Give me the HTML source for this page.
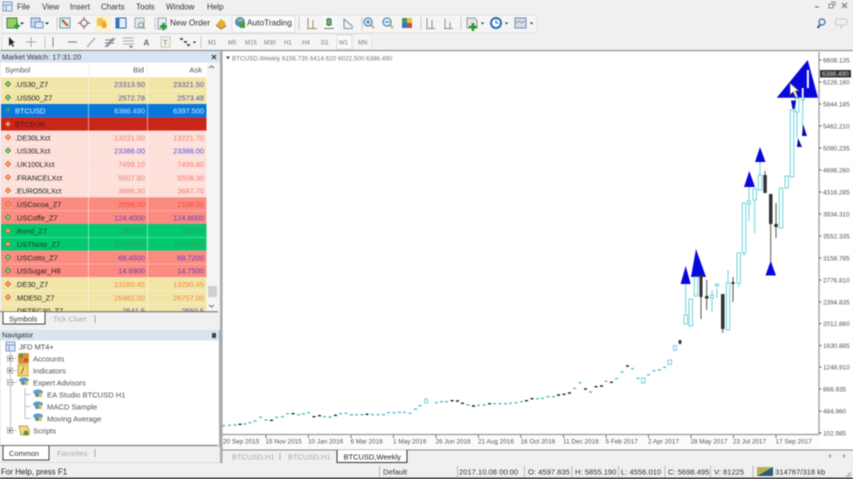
<!DOCTYPE html>
<html><head><meta charset="utf-8"><style>
html,body{margin:0;padding:0;width:853px;height:479px;overflow:hidden;background:#f0f0f0}
svg{display:block;filter:blur(.55px)}
text{font-family:"Liberation Sans",sans-serif;font-size:7.4px;fill:#222}
.m{font-size:8px;fill:#333}
.tf{font-size:6.3px;fill:#777}
.ax{font-size:6.4px;fill:#555}
.r{text-anchor:end}
.n{fill:#555055;font-size:7.6px}
.g{fill:#aaa;font-size:7.4px}
.c{fill:none;stroke:#6fd3dc;stroke-width:1}
.cb{fill:#fff;stroke:#6fd3dc;stroke-width:1}
.k{fill:none;stroke:#555;stroke-width:1}
.kb{fill:#333}
.ds{fill:none;stroke:#4fc0cc;stroke-width:1.4}
.dk{fill:none;stroke:#222;stroke-width:1.4}
.t{fill:#0808dc}
.blue{fill:#5050a8}.red{fill:#f27a70}.org{fill:#ef8a3c}
</style></head><body>
<svg width="853" height="479" viewBox="0 0 853 479" xmlns="http://www.w3.org/2000/svg">
<defs>
<g id="dg"><path d="M0-3.2 3.2 0 0 3.2-3.2 0Z" fill="#3f9a3f"/><path d="M0-1.4 1.4 0 0 1.4-1.4 0Z" fill="#c6e8a6"/></g>
<g id="do"><path d="M0-3.2 3.2 0 0 3.2-3.2 0Z" fill="#e0703a"/><path d="M0-1.4 1.4 0 0 1.4-1.4 0Z" fill="#f8c8a0"/></g>
<g id="ea"><ellipse cx="0" cy="-1" rx="5" ry="2.6" fill="#5a9fc8"/><path d="M-2 0h6v4h-6z" fill="#e0c050"/><circle cx="-1" cy="2" r="2" fill="#5c8fb0"/></g>
</defs>
<rect width="853" height="479" fill="#f0f0f0"/>

<!-- menu -->
<path d="M3 2h9v9H3z" fill="#dfe8f4" stroke="#7d9cc8"/><path d="M3 5h9M6 5v6" stroke="#7d9cc8" fill="none"/>
<text x="17" y="9.5" class="m">File</text><text x="42" y="9.5" class="m">View</text><text x="70" y="9.5" class="m">Insert</text><text x="101" y="9.5" class="m">Charts</text><text x="136" y="9.5" class="m">Tools</text><text x="166" y="9.5" class="m">Window</text><text x="207" y="9.5" class="m">Help</text>
<path d="M815 7h4" stroke="#666"/><path d="M829 4h4v4h-4zM831 2h4v4" fill="none" stroke="#888"/><path d="M842 3l5 5m0-5l-5 5" stroke="#777" stroke-width="1.2"/>

<!-- toolbars -->
<rect x="2" y="15" width="535" height="18" fill="#f5f5f5" stroke="#e2e2e2"/>
<rect x="2" y="34" width="370" height="16" fill="#f5f5f5" stroke="#e2e2e2"/>
<path d="M7 18h10v10H7z" fill="#9ccb6a" stroke="#3d8a3d"/><path d="M14 26h6m-3-3v6" stroke="#1f9a2f" stroke-width="2"/>
<path d="M20 22.500h4l-2 2z" fill="#222"/>
<path d="M31 18h9v9h-9z" fill="#c7d8ee" stroke="#6e8cc0"/><path d="M35 22h8v6h-8z" fill="#dce8f6" stroke="#6e8cc0"/>
<path d="M45 22.500h4l-2 2z" fill="#222"/>
<path d="M57 17v13M155 17v13M299 17v13M362 17v13M421 17v13M461 17v13" stroke="#c8c8c8"/>
<rect x="60" y="18" width="10" height="10" fill="#e4f0e0" stroke="#6f9abc"/><path d="M62 20l6 6" stroke="#c8503c" stroke-width="2"/><circle cx="63" cy="21" r="1.200" fill="#3f9a3f"/>
<circle cx="84" cy="23" r="3.200" fill="none" stroke="#8a8a9a" stroke-width="1.500"/><path d="M84 17v3m0 6v3m-6-6h3m6 0h3" stroke="#c87060" stroke-width="1.500"/>
<rect x="95" y="15.500" width="16" height="17" fill="#fbf2d8"/><path d="M97 18h5l2 2h2v6h-9z" fill="#f2c440"/><path d="M102 22l5 2-1 4-4 0z" fill="#e8a828"/>
<rect x="116" y="18" width="10" height="10" fill="#e6eef8" stroke="#3a6ea5"/><rect x="116" y="18" width="3.500" height="10" fill="#2f78c0"/>
<rect x="135" y="18" width="9" height="10" fill="#e8e8e8" stroke="#98a8b8"/><circle cx="141" cy="25" r="2.500" fill="none" stroke="#5a9a9a"/><path d="M143 27l2 2" stroke="#c8a030" stroke-width="1.500"/>
<path d="M158 18h8v11h-8z" fill="#e8eef4" stroke="#8aa0b0"/><path d="M160 26.500h7m-3.500-3.500v7" stroke="#1f9a2f" stroke-width="2.500"/>
<text x="170" y="25.500" class="m" style="font-size:8.300px">New Order</text>
<path d="M216 25l5-6 4 3 1 4-5 3z" fill="#e0b030"/><path d="M216 25l5 4 5-3" fill="none" stroke="#9c7420"/>
<rect x="232" y="15.500" width="63" height="17" fill="#fafafa" stroke="#e0e0e0"/>
<circle cx="240" cy="22" r="5" fill="#4f93b8"/><path d="M237 20c2-2 5-2 6 0-1 2-5 3-6 0z" fill="#98c070"/><rect x="240" y="23" width="5" height="5" fill="#4c9e3c"/>
<text x="247" y="25.500" class="m" style="font-size:8.300px">AutoTrading</text>
<path d="M308 18v10M313 20v9M307 28.500h10" stroke="#9a8a60" fill="none"/>
<rect x="322" y="15.500" width="15" height="17" fill="#fafafa"/><path d="M329 18v8" stroke="#333"/><rect x="327" y="19" width="4" height="6" fill="#6cb86c" stroke="#3a7a4a"/><path d="M324 28.500h10" stroke="#777"/>
<path d="M344 28.500V19l9 8M344 28.500h9" fill="none" stroke="#7a8aa0"/>
<circle cx="368" cy="22" r="4" fill="#e0eefa" stroke="#4d8cb8" stroke-width="1.300"/><path d="M366 22h4m-2-2v4" stroke="#2f70a0"/><path d="M371 25l3 3" stroke="#d0a040" stroke-width="1.800"/>
<circle cx="387" cy="22" r="4" fill="#e0eefa" stroke="#4d8cb8" stroke-width="1.300"/><path d="M385 22h4" stroke="#2f70a0"/><path d="M390 25l3 3" stroke="#d0a040" stroke-width="1.800"/>
<rect x="402" y="18" width="5" height="5" fill="#3c9a5c"/><rect x="407" y="18" width="5" height="5" fill="#e8c040"/><rect x="402" y="23" width="5" height="5" fill="#3a70c0"/><rect x="407" y="23" width="5" height="5" fill="#c05050"/>
<path d="M427 18v10M432 20v8M426 28.500h9" stroke="#8a8a8a" fill="none"/>
<path d="M445 19v9M450 22v6M444 28.500h9" stroke="#8a9080" fill="none"/>
<path d="M467 18h8l2 3v7h-10z" fill="#e4e4e4" stroke="#9a9a9a"/><path d="M469 27h8m-4-4v8" stroke="#1f9a2f" stroke-width="2.500"/><path d="M481 22.500h3l-1.500 2z" fill="#222"/>
<circle cx="496" cy="23" r="5" fill="#fff" stroke="#2a6ab8" stroke-width="2"/><path d="M496 20v3h2.500" stroke="#2a6ab8" fill="none"/><path d="M505 22.500h3l-1.500 2z" fill="#222"/>
<rect x="515" y="18" width="11" height="10" fill="#cfe0f0" stroke="#6f8cb0"/><path d="M516 23l3-2 3 2 3-2" stroke="#d08060" fill="none"/><path d="M530 22.500h3l-1.500 2z" fill="#222"/>
<circle cx="822" cy="22" r="3" fill="none" stroke="#5a7fb0" stroke-width="1.500"/><path d="M820 25l-2.500 3" stroke="#30507a" stroke-width="1.800"/>
<path d="M836 19h8c2 0 3 1 3 3s-1 3-3 3h-1l-2 3v-3h-5c-1-2 0-6 0-6z" fill="none" stroke="#c8c8c8"/>

<!-- toolbar 2 -->
<path d="M9 37l0 9 2-2 2 3 1-1-2-3h3z" fill="#222"/>
<path d="M31 37v10M26 42h10" stroke="#9aa" />
<path d="M45 36v12M201 36v12" stroke="#c8c8c8"/>
<path d="M53 37v10" stroke="#6c8a9a"/><path d="M68 42h9" stroke="#7a8a8a" stroke-width="1.200"/><path d="M87 47l8-9" stroke="#9a9a9a"/>
<path d="M105 47l8-9M107 47l8-9M105 43l9 0M105 40l9 0" stroke="#808080" fill="none"/>
<path d="M123 38h11M123 41h11M123 44h11" stroke="#a8a8a8"/><path d="M129 46h4l-2 2z" fill="#555"/>
<text x="143.500" y="45.500" style="font-size:8px;fill:#606a70;font-weight:bold">A</text>
<rect x="161" y="37" width="9" height="10" fill="#f4f4e8" stroke="#c8c8c0"/><text x="163" y="45" style="font-size:7.500px;fill:#777">T</text>
<path d="M180 39h3M184 42h3M187 45h3" stroke="#555" stroke-width="2"/><path d="M193 41.500h3l-1.500 2z" fill="#222"/>
<rect x="337" y="35" width="15" height="14" fill="#fafafa" stroke="#ddd"/>
<text x="208" y="44.500" style="font-size:6px;fill:#777">M1</text><text x="228" y="44.500" style="font-size:6px;fill:#777">M5</text><text x="245" y="44.500" style="font-size:6px;fill:#777">M15</text><text x="264" y="44.500" style="font-size:6px;fill:#777">M30</text><text x="284" y="44.500" style="font-size:6px;fill:#777">H1</text><text x="302" y="44.500" style="font-size:6px;fill:#777">H4</text><text x="321" y="44.500" style="font-size:6px;fill:#777">D1</text><text x="339" y="44.500" style="font-size:6px;fill:#777">W1</text><text x="358" y="44.500" style="font-size:6px;fill:#777">MN</text>

<!-- Market watch -->
<rect x="0" y="51" width="220" height="11.500" fill="#d8e4f0"/>
<text x="2" y="59.500" style="font-size:7.500px;fill:#333">Market Watch: 17:31:20</text>
<path d="M212 55l4 4m0-4l-4 4" stroke="#333" stroke-width="1.200"/>
<rect x="1" y="62.500" width="219" height="249.500" fill="#fff"/>
<text x="5" y="72.500" class="n">Symbol</text><text x="144" y="72.500" class="n r">Bid</text><text x="202" y="72.500" class="n r">Ask</text>
<path d="M89 63v14M147 63v14" stroke="#f0f0f0"/>
<rect x="1" y="77.300" width="205.500" height="26.700" fill="#f2e5a8"/>
<rect x="1" y="104" width="205.500" height="13.400" fill="#0877dc"/>
<rect x="1" y="117.400" width="205.500" height="13.300" fill="#c9261a"/>
<rect x="1" y="130.700" width="205.500" height="66.600" fill="#fde0da"/>
<rect x="1" y="197.300" width="205.500" height="26.700" fill="#fb8b80"/>
<rect x="1" y="224" width="205.500" height="26.600" fill="#00c96f"/>
<rect x="1" y="250.600" width="205.500" height="26.700" fill="#fb8b80"/>
<rect x="1" y="277.300" width="205.500" height="34.700" fill="#f2e5a8"/>
<path d="M1 90.700h205M1 144h205M1 157.400h205M1 170.700h205M1 184h205M1 210.700h205M1 237.400h205M1 264h205M1 290.700h205M1 304h205" stroke="#fff" stroke-opacity=".3"/>
<path d="M88.500 77v235M147.500 77v235" stroke="#fff" stroke-opacity=".5"/>
<use href="#dg" x="8" y="84"/><use href="#dg" x="8" y="97.500"/>
<path d="M8 108v5M8 108l-2 2M8 108l2 2" stroke="#3fa060" stroke-width="1.500" fill="none"/>
<use href="#do" x="8" y="124"/><use href="#do" x="8" y="137.300"/><use href="#dg" x="8" y="150.600"/><use href="#do" x="8" y="164"/><use href="#do" x="8" y="177.300"/><use href="#do" x="8" y="190.600"/><use href="#do" x="8" y="204"/><use href="#dg" x="8" y="217.300"/><use href="#do" x="8" y="230.600"/><use href="#do" x="8" y="244"/><use href="#dg" x="8" y="257.300"/><use href="#dg" x="8" y="270.600"/><use href="#do" x="8" y="284"/><use href="#do" x="8" y="297.300"/>
<text x="15" y="87">.US30_Z7</text><text x="145" y="87" class="r blue">23313.50</text><text x="204" y="87" class="r blue">23321.50</text>
<text x="15" y="100.300">.US500_Z7</text><text x="145" y="100.300" class="r blue">2572.78</text><text x="204" y="100.300" class="r blue">2573.48</text>
<text x="15" y="113.600" style="fill:#e8f4ff">BTCUSD</text><text x="145" y="113.600" class="r" style="fill:#c4e0fa">6386.490</text><text x="204" y="113.600" class="r" style="fill:#d8ecff">6397.500</text>
<text x="15" y="127" style="fill:#5a1410">BTCEUR</text>
<text x="15" y="140.300">.DE30LXct</text><text x="145" y="140.300" class="r red">13221.00</text><text x="204" y="140.300" class="r red">13221.70</text>
<text x="15" y="153.600">.US30LXct</text><text x="145" y="153.600" class="r" style="fill:#5a50e0">23386.00</text><text x="204" y="153.600" class="r" style="fill:#5a50e0">23388.00</text>
<text x="15" y="167">.UK100LXct</text><text x="145" y="167" class="r red">7499.10</text><text x="204" y="167" class="r red">7499.80</text>
<text x="15" y="180.300">.FRANCELXct</text><text x="145" y="180.300" class="r red">5507.60</text><text x="204" y="180.300" class="r red">5508.30</text>
<text x="15" y="193.600">.EURO50LXct</text><text x="145" y="193.600" class="r red">3686.30</text><text x="204" y="193.600" class="r red">3687.70</text>
<text x="15" y="207">.USCocoa_Z7</text><text x="145" y="207" class="r" style="fill:#f04a40">2099.00</text><text x="204" y="207" class="r" style="fill:#f04a40">2108.00</text>
<text x="15" y="220.300">.USCoffe_Z7</text><text x="145" y="220.300" class="r" style="fill:#6a3cc8">124.4000</text><text x="204" y="220.300" class="r" style="fill:#6a3cc8">124.8000</text>
<text x="15" y="233.600" style="fill:#16401e">.Bund_Z7</text><text x="145" y="233.600" class="r" style="fill:#3c9a50">162.73</text><text x="204" y="233.600" class="r" style="fill:#3c9a50">162.76</text>
<text x="15" y="247" style="fill:#16401e">.USTNote_Z7</text><text x="145" y="247" class="r" style="fill:#3c9a50">124.9000</text><text x="204" y="247" class="r" style="fill:#3c9a50">124.9800</text>
<text x="15" y="260.300">.USCotto_Z7</text><text x="145" y="260.300" class="r" style="fill:#6a3cc8">68.4500</text><text x="204" y="260.300" class="r" style="fill:#6a3cc8">68.7200</text>
<text x="15" y="273.600">.USSugar_H8</text><text x="145" y="273.600" class="r" style="fill:#6a3cc8">14.6900</text><text x="204" y="273.600" class="r" style="fill:#6a3cc8">14.7500</text>
<text x="15" y="287">.DE30_Z7</text><text x="145" y="287" class="r org">13280.45</text><text x="204" y="287" class="r org">13290.45</text>
<text x="15" y="300.300">.MDE50_Z7</text><text x="145" y="300.300" class="r org">26482.00</text><text x="204" y="300.300" class="r org">26757.00</text>
<text x="15" y="313.600">.DETEC30_Z7</text><text x="145" y="313.600" class="r blue">2541.5</text><text x="204" y="313.600" class="r blue">2550.5</text>
<!-- scrollbar -->
<rect x="207" y="63" width="13" height="249" fill="#f4f4f4"/>
<path d="M209 68l2.500-2 2.500 2" fill="none" stroke="#666"/>
<rect x="208" y="286" width="9" height="11" fill="#d0d0d0"/>
<path d="M209 305l2.500 2 2.500-2" fill="none" stroke="#666"/>
<!-- mw tabs -->
<rect x="0" y="312" width="220" height="14" fill="#f0f0f0"/>
<path d="M0 311.700h218" stroke="#666"/>
<path d="M3 312v12h42v-12" fill="#fff" stroke="#444"/>
<text x="9" y="321.500" style="fill:#333">Symbols</text><text x="53" y="321.500" class="g">Tick Chart</text><path d="M95 315v8" stroke="#aaa"/>

<!-- Navigator -->
<rect x="0" y="330" width="220" height="10.500" fill="#d8e4f0"/>
<text x="2" y="337.500" style="fill:#333;font-size:7.300px">Navigator</text>
<rect x="212" y="333" width="4" height="5" fill="#444"/>
<rect x="1" y="340.500" width="218" height="105" fill="#fff"/>
<path d="M219.500 330v117" stroke="#aaa"/>
<rect x="6" y="342" width="9" height="9" fill="#dce8f6" stroke="#7d9cc8"/><path d="M6 345h9M9 345v6" stroke="#7d9cc8"/>
<text x="19" y="349.500" style="fill:#444">JFD MT4+</text>
<path d="M10.500 352v79M10.500 358.500h6M10.500 370.500h6M10.500 382.500h6M10.500 430.500h6M25 388v30.500M25 394.500h6M25 406.500h6M25 418.500h6" stroke="#c0c0c0" fill="none"/>
<g fill="#fff" stroke="#aaa"><rect x="7.500" y="356" width="5" height="5"/><rect x="7.500" y="368" width="5" height="5"/><rect x="7.500" y="380" width="5" height="5"/><rect x="7.500" y="428" width="5" height="5"/></g>
<path d="M8.500 358.500h3M10 357v3M8.500 370.500h3M10 369v3M8.500 382.500h3M8.500 430.500h3M10 429v3" stroke="#666"/>
<rect x="18" y="353" width="11" height="11" rx="2" fill="#d89030"/><circle cx="21" cy="356" r="2" fill="#4c9e3c"/><circle cx="26" cy="360" r="2" fill="#c85030"/>
<rect x="18" y="365" width="10" height="11" fill="#f0d878" stroke="#c8a040"/><path d="M24 367l-3 7" stroke="#a86020"/>
<use href="#ea" x="24" y="381"/><use href="#ea" x="38" y="393"/><use href="#ea" x="38" y="405"/><use href="#ea" x="38" y="417"/>
<path d="M19 426h8l2 3v6h-8z" fill="#f0dc80" stroke="#c0a050"/><circle cx="26" cy="433" r="2.500" fill="#5c9a40"/>
<text x="33" y="361.500" class="n">Accounts</text><text x="33" y="373.500" class="n">Indicators</text><text x="33" y="385.500" class="n">Expert Advisors</text><text x="47" y="397.500" class="n">EA Studio BTCUSD H1</text><text x="47" y="409.500" class="n">MACD Sample</text><text x="47" y="421.500" class="n">Moving Average</text><text x="33" y="433.500" class="n">Scripts</text>
<path d="M0 445.500h218" stroke="#666"/>
<path d="M3 446v14h46v-14" fill="#fff" stroke="#444"/>
<text x="9" y="456" style="fill:#333">Common</text><text x="57" y="456" class="g">Favorites</text><path d="M95 449v8" stroke="#aaa"/>

<!-- chart frame -->
<path d="M0 50.500h853" stroke="#8a8a8a"/>
<rect x="220" y="51" width="2.500" height="412" fill="#aaa"/>
<rect x="223" y="52" width="596" height="382.500" fill="#fff"/>
<rect x="223" y="434.500" width="630" height="15.500" fill="#fbfbfb"/>
<rect x="820" y="52" width="33" height="398" fill="#fff"/>
<path d="M819 52v383M222 434.500h597" stroke="#999" stroke-width="1.200"/>
<path d="M226 56.500h4l-2 3z" fill="#444"/>
<text x="232" y="60.500" class="tf">BTCUSD,Weekly  6156.735 6414.620 6022.500 6386.490</text>

<!-- dashes -->
<path class="ds" d="M222 425.700h3M228 425.300h3M233.500 425h3M243.500 424h3M248.500 422.700h3M253.500 421h3M259 417.300h3M264.500 420h3M275 417.300h3M281 416.700h3M286 413.700h3M297 414.700h3M302 414h3M307 412.700h3M323 416.700h3M328.500 417h3M339 413.700h3M344.500 413.300h3M350 415h3M355 414.700h3M360.500 414.700h3M371 414.700h3M376.500 414.700h3M382 414.700h3M387 412.700h3M392.500 412.700h3M398 412.300h3M403 412.300h3M408.500 413.300h3M414 409h3M418.500 405.700h3M435 402.700h3M440 401.700h3M445 401.700h3M466.500 405h3M477 405.300h3M482.500 405h3M493 403.700h3M498.500 403.700h3M504 403.700h3M509 403.300h3M514.500 402.700h3M520 401.700h3M536 398.700h3M541 398.300h3M546.500 396.700h3M552 396.700h3M573 388.300h3M578.500 382.700h3M589 392h3M604.500 381.300h3M615 378.700h3M620.500 372h3M631 368.700h3M636.500 378.300h3M647 374.700h3M652.500 370.700h3M657.800 370h3M663 367.300h3"/>
<path class="dk" d="M238.500 424.300h3M270 420.300h3M291.500 413.700h3M312.500 416.700h3M318 415.700h3M334 415.300h3M365.500 414.300h3M450.500 400.700h3M456 401h3M461 403.300h3M472 406h3M488 403.700h3M525 400.700h3M530.500 398.700h3M557 395h3M562.500 394.300h3M568 393h3M584 389h3M594.500 386.700h3M600 386h3M610 382.300h3M626 366h3"/>
<rect x="424.500" y="399" width="3" height="4" class="cb"/>
<rect x="641.500" y="378" width="3.500" height="5" class="cb"/>
<rect x="668" y="360" width="3.500" height="4.500" class="cb"/>
<rect x="673.500" y="345.500" width="3" height="5" class="cb"/>
<path class="k" d="M680 339.500v5" /><rect x="678.500" y="340.500" width="3" height="3" class="kb"/>

<!-- triangles -->
<path class="t" d="M807.700 60 818 97.700H776.700Z"/>
<path class="t" d="M685.700 266 690.700 284H680.600Z"/>
<path class="t" d="M696 249 706 277H691Z"/>
<path class="t" d="M760 147 765.500 162H755Z"/>
<path class="t" d="M749.300 171 755 187H744Z"/>
<path class="t" d="M770.700 260.700 776 275.500H765.500Z"/>

<!-- wicks -->
<path class="c" d="M685.700 284V315M728 270V284M738.700 283V287M744 253V256M749 187V221M754.700 200V233M760 162V175M797 112V138M802.700 100V127M712 290V312M717 288V298"/>
<path class="k" d="M701 297V319M706.700 280V310M722.700 329V333M733 277V302M765 171V176M770.700 224V262M776 203V238"/>
<!-- bull -->
<g class="cb">
<rect x="684" y="315" width="3.500" height="9"/><rect x="689" y="299" width="3.500" height="27"/><rect x="694.300" y="277" width="3.500" height="19"/><rect x="710.500" y="295" width="3" height="3"/><rect x="715.500" y="284" width="3" height="2"/><rect x="726.300" y="283" width="3.500" height="47"/><rect x="737" y="253" width="3.500" height="30"/><rect x="742.300" y="203" width="3.500" height="50"/><rect x="747.500" y="201" width="3" height="3"/><rect x="753" y="189" width="3.500" height="11"/><rect x="758.300" y="175" width="3.500" height="15"/><rect x="779.300" y="188" width="3.500" height="40"/><rect x="785" y="176" width="3.500" height="12"/><rect x="790.300" y="110" width="3.500" height="67"/><rect x="795.300" y="98" width="3.500" height="14"/>
</g>
<rect x="801.700" y="98" width="2.500" height="2" fill="#fff" stroke="#6fd3dc"/>
<path d="M801.800 88h1.800v10h-1.800zM806.900 70h2v18h-2z" fill="#fff"/>
<path d="M791 100.500h5l-1.500 8.500h-2Z" fill="#0a0ab0"/>
<path d="M798 138 802 147H797Z" fill="#0a0ab0"/>
<path d="M803 124 807 136H802Z" fill="#0a0ab0"/>
<!-- bear -->
<rect x="699.500" y="275" width="3" height="22" class="kb"/><rect x="705" y="296" width="3.500" height="2.500" class="kb"/><rect x="721" y="294" width="3.500" height="35" class="kb"/><rect x="731.500" y="282" width="3" height="2" class="kb"/><rect x="763.300" y="175" width="3.500" height="18" class="kb"/><rect x="769" y="194" width="3.500" height="30" class="kb"/><rect x="774.300" y="224" width="3.500" height="3" class="kb"/>
<!-- cursor -->
<path d="M790 83 790 95 793 92 796 98 798 97 795.500 91 799 91Z" fill="#fff" stroke="#555" stroke-width=".8"/>

<!-- price axis -->
<path d="M819 60h2.500M819 82h2.500M819 104h2.500M819 126h2.500M819 148h2.500M819 170h2.500M819 192h2.500M819 214h2.500M819 236h2.500M819 258h2.500M819 280h2.500M819 302h2.500M819 323.500h2.500M819 345.500h2.500M819 367h2.500M819 389h2.500M819 411h2.500M819 433h2.500" stroke="#666"/>
<text x="823" y="62.500" class="ax">6608.135</text>
<rect x="820" y="70" width="31" height="7.500" fill="#333"/><text x="822" y="76" class="ax" style="fill:#ddd">6386.490</text>
<text x="823" y="84.500" class="ax">6226.160</text><text x="823" y="106.500" class="ax">5844.185</text><text x="823" y="128.500" class="ax">5462.210</text><text x="823" y="150.500" class="ax">5080.235</text><text x="823" y="172.500" class="ax">4698.260</text><text x="823" y="194.500" class="ax">4316.285</text><text x="823" y="216.500" class="ax">3934.310</text><text x="823" y="238.500" class="ax">3552.335</text><text x="823" y="260.500" class="ax">3158.785</text><text x="823" y="282.500" class="ax">2776.810</text><text x="823" y="304.500" class="ax">2394.835</text><text x="823" y="326" class="ax">2012.860</text><text x="823" y="348" class="ax">1630.885</text><text x="823" y="369.500" class="ax">1248.910</text><text x="823" y="391.500" class="ax">866.935</text><text x="823" y="413.500" class="ax">484.960</text><text x="823" y="435.500" class="ax">102.985</text>
<!-- time axis -->
<path d="M266 435v3M308.500 435v3M351 435v3M393.500 435v3M436 435v3M478.500 435v3M521 435v3M563.500 435v3M606 435v3M648.500 435v3M691 435v3M733.500 435v3M776 435v3" stroke="#777"/>
<text x="223" y="443.500" class="ax">20 Sep 2015</text><text x="265.500" y="443.500" class="ax">15 Nov 2015</text><text x="308" y="443.500" class="ax">10 Jan 2016</text><text x="350.500" y="443.500" class="ax">6 Mar 2016</text><text x="393" y="443.500" class="ax">1 May 2016</text><text x="435.500" y="443.500" class="ax">26 Jun 2016</text><text x="478" y="443.500" class="ax">21 Aug 2016</text><text x="520.500" y="443.500" class="ax">16 Oct 2016</text><text x="563" y="443.500" class="ax">11 Dec 2016</text><text x="605.500" y="443.500" class="ax">5 Feb 2017</text><text x="648" y="443.500" class="ax">2 Apr 2017</text><text x="690.500" y="443.500" class="ax">28 May 2017</text><text x="733" y="443.500" class="ax">23 Jul 2017</text><text x="775.500" y="443.500" class="ax">17 Sep 2017</text>
<!-- chart tabs -->
<rect x="222.500" y="450" width="630.500" height="13" fill="#f0f0f0"/>
<path d="M222 450h631" stroke="#8a8a8a"/>
<path d="M337 450v12.500h70V450" fill="#fff" stroke="#333"/>
<text x="232" y="459.500" class="g" style="font-size:7.500px">BTCUSD,H1</text><path d="M280 453v7" stroke="#aaa"/><text x="288" y="459.500" class="g" style="font-size:7.500px">BTCUSD,H1</text>
<text x="343.500" y="459.500" style="font-size:7.500px;fill:#222">BTCUSD,Weekly</text>
<path d="M831 454.500l-2 1.500 2 1.500M843 454.500l2 1.500-2 1.500" fill="none" stroke="#888"/>

<!-- status bar -->
<rect x="0" y="463" width="853" height="15" fill="#f0f0f0"/>
<path d="M0 462.500h220" stroke="#ddd"/>
<path d="M379.500 466v11M457.500 466v11M524.500 466v11M572 466v11M618.500 466v11M665 466v11M710.500 466v11M753 466v11" stroke="#bbb"/>
<text x="1" y="474.500" style="font-size:8px;fill:#222">For Help, press F1</text>
<text x="383" y="474.500" style="font-size:7.600px;fill:#333">Default</text>
<text x="459" y="474.500" style="font-size:7.600px;fill:#333">2017.10.08 00:00</text>
<text x="528" y="474.500" style="font-size:7.600px;fill:#333">O: 4597.835</text>
<text x="575" y="474.500" style="font-size:7.600px;fill:#333">H: 5855.190</text>
<text x="621" y="474.500" style="font-size:7.600px;fill:#333">L: 4556.010</text>
<text x="668" y="474.500" style="font-size:7.600px;fill:#333">C: 5698.495</text>
<text x="714" y="474.500" style="font-size:7.600px;fill:#333">V: 81225</text>
<rect x="757" y="467" width="16" height="9" fill="#b8b050"/><path d="M757 476h16v-9z" fill="#2a5a80"/>
<text x="775" y="474.500" style="font-size:7.600px;fill:#333">314767/318 kb</text>
<path d="M846 477l5-5M848.500 477l2.500-2.500" stroke="#aaa"/>
<rect x="0" y="477.700" width="853" height="1.300" fill="#111"/>
</svg>
</body></html>
